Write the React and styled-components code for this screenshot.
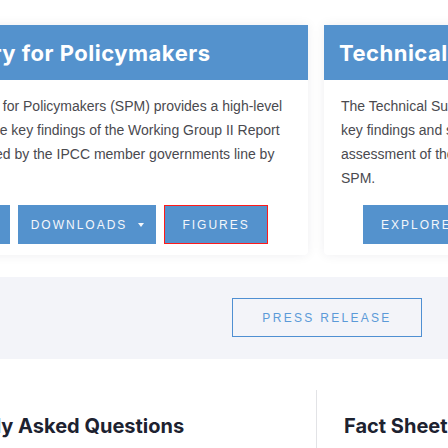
import React from 'react';
import styled, { createGlobalStyle } from 'styled-components';

const GlobalStyle = createGlobalStyle`
    body {
        margin: 0;
        background: #ffffff;
        overflow: hidden;
        font-family: "Liberation Sans", Arial, sans-serif;
    }
`;

const Page = styled.div`
    width: 448px;
    overflow: hidden;
`;

const CardsSection = styled.section`
    padding: 25px 0 22px;
`;

const CardsRow = styled.div`
    margin-left: -106px;
    display: flex;
    gap: 16px;
`;

const Card = styled.article`
    flex: 0 0 414px;
    background: #ffffff;
    border-radius: 0 0 4px 4px;
    box-shadow: 0 0 12px rgba(20, 30, 60, 0.07);
    padding-bottom: 11px;
`;

const CardHeader = styled.header`
    height: 55px;
    background: #5492cd;
    display: flex;
    align-items: center;
    padding: 0 15px;
`;

const Title = styled.h2`
    margin: 0;
    font-family: Inter, "Liberation Sans", sans-serif;
    font-weight: 700;
    font-size: 22px;
    letter-spacing: 0.5px;
    color: #ffffff;
    white-space: nowrap;
`;

const CardBody = styled.p`
    margin: 0;
    padding: 14px 17px 0;
    font-size: 14px;
    line-height: 24px;
    color: #4a4a4f;
    white-space: nowrap;
`;

const ButtonRow = styled.div`
    margin-top: 15px;
    padding-left: ${p => p.$inset}px;
    display: flex;
    gap: 8px;
`;

const Button = styled.button`
    height: 39px;
    padding: ${p => (p.$caret ? '0 11px 0 12px' : '0 17px')};
    background: #5492cd;
    border: 1px solid ${p => (p.$focused ? '#ff1a1a' : '#5492cd')};
    color: #f4f7fb;
    font-family: "Liberation Sans", Arial, sans-serif;
    font-size: 12px;
    letter-spacing: 2px;
    text-transform: uppercase;
    display: flex;
    align-items: center;
    gap: 11px;
    white-space: nowrap;
    cursor: pointer;
`;

const Caret = styled.span`
    width: 0;
    height: 0;
    border-left: 3.5px solid transparent;
    border-right: 3.5px solid transparent;
    border-top: 4px solid #f4f7fb;
`;

const PressSection = styled.section`
    background: #f3f4f9;
    padding: 21px 0 22px 232px;
`;

const OutlineButton = styled.button`
    width: 190px;
    height: 39px;
    background: transparent;
    border: 1px solid #4f8fd2;
    color: #5b9ad8;
    font-family: "Liberation Sans", Arial, sans-serif;
    font-size: 12px;
    letter-spacing: 2.3px;
    text-transform: uppercase;
    cursor: pointer;
`;

const BottomSection = styled.section`
    padding-top: 31px;
    height: 58px;
`;

const Columns = styled.div`
    margin-left: -106px;
    display: grid;
    grid-template-columns: 422px 1fr;
    height: 100%;
`;

const Column = styled.div`
    padding: 24px 0 0 ${p => (p.$divided ? '27px' : '14px')};
    border-left: ${p => (p.$divided ? '1px solid #e2e3e6' : 'none')};
`;

const Heading = styled.h3`
    margin: 0;
    font-family: Inter, "Liberation Sans", sans-serif;
    font-weight: 700;
    font-size: 20px;
    line-height: 24px;
    color: #1d2230;
    white-space: nowrap;
`;

const App = () => {
    return (
        <Page>
            <GlobalStyle />
            <CardsSection>
                <CardsRow>
                    <Card>
                        <CardHeader>
                            <Title>Summary for Policymakers</Title>
                        </CardHeader>
                        <CardBody>
                            The Summary for Policymakers (SPM) provides a high-level<br />
                            summary of the key findings of the Working Group II Report<br />
                            and is approved by the IPCC member governments line by<br />
                            line.
                        </CardBody>
                        <ButtonRow $inset={9}>
                            <Button>Explore</Button>
                            <Button $caret>Downloads <Caret /></Button>
                            <Button $focused>Figures</Button>
                        </ButtonRow>
                    </Card>
                    <Card>
                        <CardHeader>
                            <Title>Technical Summary</Title>
                        </CardHeader>
                        <CardBody>
                            The Technical Summary (TS) includes an extended<br />
                            key findings and serves as a link between the comprehensive<br />
                            assessment of the Working Group II Report and the<br />
                            SPM.
                        </CardBody>
                        <ButtonRow $inset={39}>
                            <Button>Explore</Button>
                            <Button $caret>Downloads <Caret /></Button>
                            <Button>Figures</Button>
                        </ButtonRow>
                    </Card>
                </CardsRow>
            </CardsSection>
            <PressSection>
                <OutlineButton>Press Release</OutlineButton>
            </PressSection>
            <BottomSection>
                <Columns>
                    <Column>
                        <Heading>Frequently Asked Questions</Heading>
                    </Column>
                    <Column $divided>
                        <Heading>Fact Sheet</Heading>
                    </Column>
                </Columns>
            </BottomSection>
        </Page>
    );
};

export default App;
